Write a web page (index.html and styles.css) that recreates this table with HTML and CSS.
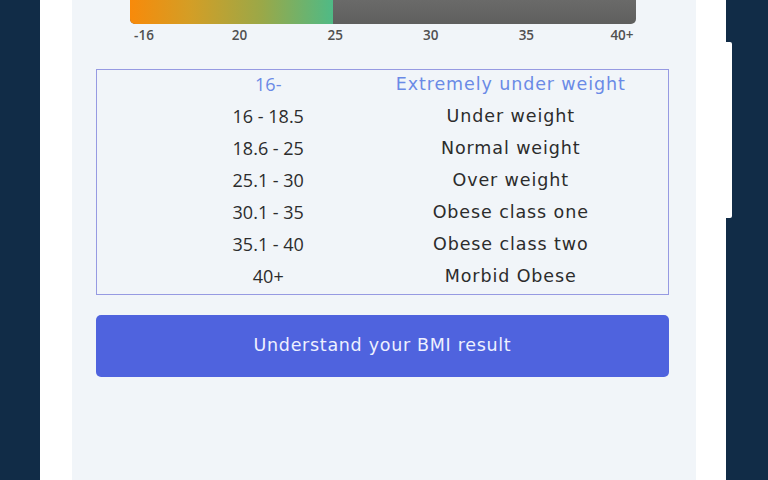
FILE: index.html
```html
<!DOCTYPE html>
<html lang="en">
<head>
<meta charset="utf-8">
<title>BMI result</title>
<link rel="stylesheet" href="styles.css">
</head>
<body>
<div class="phone">
  <div class="side-button"></div>
  <main class="screen">
    <div class="scale">
      <div class="bar">
        <div class="bar-fill"></div>
      </div>
      <div class="ticks">
        <span>-16</span><span>20</span><span>25</span><span>30</span><span>35</span><span>40+</span>
      </div>
    </div>
    <div class="table">
      <div class="row head"><span class="range">16-</span><span class="label">Extremely under weight</span></div>
      <div class="row"><span class="range">16 - 18.5</span><span class="label">Under weight</span></div>
      <div class="row"><span class="range">18.6 - 25</span><span class="label">Normal weight</span></div>
      <div class="row"><span class="range">25.1 - 30</span><span class="label">Over weight</span></div>
      <div class="row"><span class="range">30.1 - 35</span><span class="label">Obese class one</span></div>
      <div class="row"><span class="range">35.1 - 40</span><span class="label">Obese class two</span></div>
      <div class="row"><span class="range">40+</span><span class="label">Morbid Obese</span></div>
    </div>
    <button class="cta">Understand your BMI result</button>
  </main>
</div>
</body>
</html>
```
FILE: styles.css
```css
* { box-sizing: border-box; }
html, body { margin: 0; height: 100%; }
body {
  background: #112c47;
  font-family: "Open Sans", "Liberation Sans", sans-serif;
  overflow: hidden;
}
.phone {
  position: relative;
  margin-left: 40px;
  width: 686px;
  height: 480px;
  background: #ffffff;
  padding: 0 30px 0 32px;
}
.side-button {
  position: absolute;
  right: -6px;
  top: 42px;
  width: 6px;
  height: 176px;
  background: #ffffff;
  border-radius: 0 2px 2px 0;
}
.screen {
  height: 100%;
  background: #f1f5f9;
  display: flex;
  flex-direction: column;
  padding: 0 27px 0 24px;
}
.scale {
  margin: 0 33px 0 34px;
}
.bar {
  height: 24px;
  background: linear-gradient(#6a6a69, #5f5f5e);
  border-radius: 0 0 5px 5px;
  overflow: hidden;
}
.bar-fill {
  width: 40.1%;
  height: 100%;
  background: linear-gradient(90deg, #f88a0a 0%, #d39e26 30%, #9aa848 65%, #4fba86 100%);
}
.ticks {
  display: flex;
  justify-content: space-between;
  margin-top: 2px;
}
.ticks span {
  width: 28px;
  text-align: center;
  font-size: 13.5px;
  font-weight: 600;
  color: #505050;
  line-height: 18px;
  white-space: nowrap;
}
.table {
  margin-top: 25px;
  border: 1px solid #969ae2;
  display: flex;
  flex-direction: column;
  padding: 0 36px 0 50px;
}
.row {
  display: grid;
  grid-template-columns: 1fr 1fr;
  height: 32px;
  padding-bottom: 4px;
  align-items: center;
  text-align: center;
  color: #2c2c2c;
  white-space: nowrap;
}
.range {
  font-size: 18px;
  font-weight: 500;
}
.label {
  font-family: "DejaVu Sans", sans-serif;
  font-size: 17.5px;
  letter-spacing: 0.9px;
}
.row.head { color: #6a8ae6; }
.cta {
  margin-top: 20px;
  height: 62px;
  border: none;
  border-radius: 5px;
  background: #4f63de;
  color: #eef0ff;
  font-family: "DejaVu Sans", sans-serif;
  font-size: 17.5px;
  letter-spacing: 0.7px;
  padding: 0 0 3px;
}
```
